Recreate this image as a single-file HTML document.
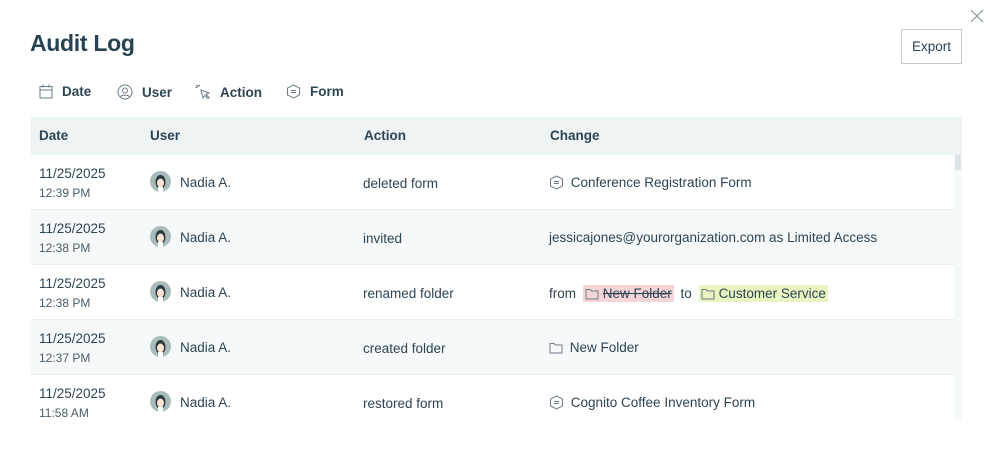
<!DOCTYPE html>
<html><head><style>
*{margin:0;padding:0;box-sizing:border-box}
body{width:991px;height:468px;background:#fff;font-family:"Liberation Sans",sans-serif;color:#2d4453;position:relative;overflow:hidden}
.abs{position:absolute}
h1{position:absolute;left:30px;top:30px;font-size:23px;font-weight:bold;color:#274353;letter-spacing:-0.3px}
.export{position:absolute;left:901px;top:29px;width:61px;height:35px;border:1px solid #c5cdd2;font-size:13.5px;line-height:33px;text-align:center;color:#2d4453}
.filt{position:absolute;top:84px;font-size:13.5px;font-weight:bold;color:#2d4453;display:flex;align-items:center;gap:9px}
.table{position:absolute;left:31px;top:117px;width:931px;height:303px;overflow:hidden}
.hdr{height:38px;background:#eef3f4;position:relative;font-weight:bold;font-size:13.5px}
.hdr span{position:absolute;top:11px}
.row{height:55px;position:relative;border-bottom:1px solid #eaeff1;width:923px;font-size:13.5px}
.d1{position:absolute;left:8px;top:11px;font-size:13.5px}
.d2{position:absolute;left:8px;top:31px;font-size:12px;color:#4a5d69}
.av{position:absolute;left:119px;top:16px;width:21px;height:21px;border-radius:50%;background:#a9bcbc;overflow:hidden}
.un{position:absolute;left:149px;top:20px}
.ac{position:absolute;left:332px;top:21px}
.ch{position:absolute;left:518px;top:20px;display:flex;align-items:center;gap:3px;white-space:nowrap}
.sb{position:absolute;left:923px;top:38px;width:8px;height:265px;background:#f6f9fa}
.th{position:absolute;left:924px;top:38px;width:6px;height:15px;background:#dde4e7}
.red{background:#f6d5d8;padding:1px 2px;text-decoration:line-through;display:flex;align-items:center;gap:4px}
.grn{background:#e8f5c0;padding:1px 2px;display:flex;align-items:center;gap:4px}
</style></head><body>
<svg class="abs" style="left:970px;top:9px" width="14" height="14" viewBox="0 0 14 14"><path d="M1 1L13 13M13 1L1 13" stroke="#8a979f" stroke-width="1.2"/></svg>
<h1>Audit Log</h1>
<div class="export">Export</div>
<div class="filt" style="left:39px"><svg width="14" height="15" viewBox="0 0 14 15" fill="none" stroke="#6b7c86"><rect x="1" y="2.5" width="12" height="11.5"/><path d="M1 6h12M4 0.5v3M10 0.5v3"/></svg>Date</div>
<div class="filt" style="left:117px"><svg width="16" height="16" viewBox="0 0 16 16" fill="none" stroke="#6b7c86"><circle cx="8" cy="8" r="7"/><circle cx="8" cy="6.5" r="2.5"/><path d="M3.5 13c1-2.5 8-2.5 9 0"/></svg>User</div>
<div class="filt" style="left:195px"><svg width="16" height="16" viewBox="0 0 16 16" fill="none" stroke="#6b7c86"><path d="M6 6l8 3-3 1.5 3 3-1 1-3-3L8 14z"/><path d="M3 1v2M0.5 3.5h2M1 1l1.5 1.5M5 1l-1 1" /></svg>Action</div>
<div class="filt" style="left:286px"><svg width="15" height="15" viewBox="0 0 15 15" fill="none" stroke="#6b7c86"><path d="M7.5 1l6 3v7l-6 3-6-3V4z"/><path d="M5 6.5h5M5 8.5h5"/></svg>Form</div>
<div class="table">
<div class="hdr"><span style="left:8px">Date</span><span style="left:119px">User</span><span style="left:333px">Action</span><span style="left:519px">Change</span></div>
<div style="position:relative">
<div class="row" style="background:#fff"><div class="d1">11/25/2025</div><div class="d2">12:39 PM</div><div class="av"><svg width="21" height="21"><ellipse cx="10.5" cy="11" rx="5" ry="7" fill="#2a3a40"/><ellipse cx="10.5" cy="12" rx="3.5" ry="4.5" fill="#fbe3d3"/><rect x="8" y="16" width="5" height="5" fill="#fff"/></svg></div><div class="un">Nadia A.</div><div class="ac">deleted form</div><div class="ch"><svg width="15" height="15" viewBox="0 0 15 15" fill="none" stroke="#6b7c86"><path d="M7.5 1l6 3v7l-6 3-6-3V4z"/><path d="M5 6.5h5M5 8.5h5"/></svg>&nbsp;Conference Registration Form</div></div>
<div class="row" style="background:#f6f9fa"><div class="d1">11/25/2025</div><div class="d2">12:38 PM</div><div class="av"><svg width="21" height="21"><ellipse cx="10.5" cy="11" rx="5" ry="7" fill="#2a3a40"/><ellipse cx="10.5" cy="12" rx="3.5" ry="4.5" fill="#fbe3d3"/><rect x="8" y="16" width="5" height="5" fill="#fff"/></svg></div><div class="un">Nadia A.</div><div class="ac">invited</div><div class="ch">jessicajones@yourorganization.com as Limited Access</div></div>
<div class="row" style="background:#fff"><div class="d1">11/25/2025</div><div class="d2">12:38 PM</div><div class="av"><svg width="21" height="21"><ellipse cx="10.5" cy="11" rx="5" ry="7" fill="#2a3a40"/><ellipse cx="10.5" cy="12" rx="3.5" ry="4.5" fill="#fbe3d3"/><rect x="8" y="16" width="5" height="5" fill="#fff"/></svg></div><div class="un">Nadia A.</div><div class="ac">renamed folder</div><div class="ch">from&nbsp;<span class="red"><svg width="14" height="12" viewBox="0 0 14 12" fill="none" stroke="#6b7c86"><path d="M1 1.5h4l1.5 1.5h6.5v8h-12z"/></svg>New Folder</span>&nbsp;to&nbsp;<span class="grn"><svg width="14" height="12" viewBox="0 0 14 12" fill="none" stroke="#6b7c86"><path d="M1 1.5h4l1.5 1.5h6.5v8h-12z"/></svg>Customer Service</span></div></div>
<div class="row" style="background:#f6f9fa"><div class="d1">11/25/2025</div><div class="d2">12:37 PM</div><div class="av"><svg width="21" height="21"><ellipse cx="10.5" cy="11" rx="5" ry="7" fill="#2a3a40"/><ellipse cx="10.5" cy="12" rx="3.5" ry="4.5" fill="#fbe3d3"/><rect x="8" y="16" width="5" height="5" fill="#fff"/></svg></div><div class="un">Nadia A.</div><div class="ac">created folder</div><div class="ch"><svg width="14" height="12" viewBox="0 0 14 12" fill="none" stroke="#6b7c86"><path d="M1 1.5h4l1.5 1.5h6.5v8h-12z"/></svg>&nbsp;New Folder</div></div>
<div class="row" style="background:#fff"><div class="d1">11/25/2025</div><div class="d2">11:58 AM</div><div class="av"><svg width="21" height="21"><ellipse cx="10.5" cy="11" rx="5" ry="7" fill="#2a3a40"/><ellipse cx="10.5" cy="12" rx="3.5" ry="4.5" fill="#fbe3d3"/><rect x="8" y="16" width="5" height="5" fill="#fff"/></svg></div><div class="un">Nadia A.</div><div class="ac">restored form</div><div class="ch"><svg width="15" height="15" viewBox="0 0 15 15" fill="none" stroke="#6b7c86"><path d="M7.5 1l6 3v7l-6 3-6-3V4z"/><path d="M5 6.5h5M5 8.5h5"/></svg>&nbsp;Cognito Coffee Inventory Form</div></div>
</div>
<div class="sb"></div><div class="th"></div>
</div>
</body></html>
